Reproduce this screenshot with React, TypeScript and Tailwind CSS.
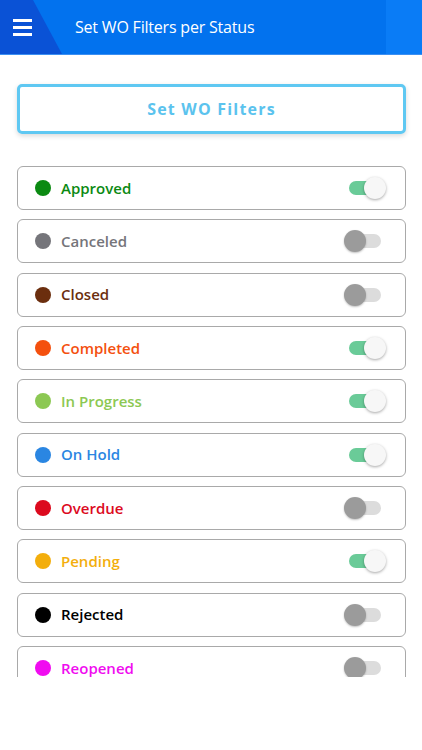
import React from "react";

const items: { name: string; color: string; on: boolean }[] = [
  { name: "Approved", color: "#0b8a12", on: true },
  { name: "Canceled", color: "#75757a", on: false },
  { name: "Closed", color: "#6b2e0e", on: false },
  { name: "Completed", color: "#f4500e", on: true },
  { name: "In Progress", color: "#8cc853", on: true },
  { name: "On Hold", color: "#2a86e2", on: true },
  { name: "Overdue", color: "#dc0a1e", on: false },
  { name: "Pending", color: "#f3ae0c", on: true },
  { name: "Rejected", color: "#000000", on: false },
  { name: "Reopened", color: "#f00cf0", on: false },
];

function Toggle({ on }: { on: boolean }) {
  return (
    <div className="relative w-[32px] h-[14px] mr-[24px]">
      <div
        className={
          on
            ? "absolute inset-0 rounded-full bg-[#6acb98]"
            : "absolute inset-0 rounded-full bg-[#dcdcdc]"
        }
      />
      {on ? (
        <div className="absolute top-[-4px] right-[-5px] w-[22px] h-[22px] rounded-full bg-[#f7f7f7] shadow-[0_1px_3px_rgba(0,0,0,0.35)]" />
      ) : (
        <div className="absolute top-[-4px] left-[-5px] w-[22px] h-[22px] rounded-full bg-[#9b9b9b] shadow-[0_1px_2px_rgba(0,0,0,0.25)]" />
      )}
    </div>
  );
}

export default function App() {
  return (
    <div
      className="w-[422px] h-[750px] bg-white overflow-hidden"
      style={{ fontFamily: '"Open Sans", "Noto Sans", sans-serif' }}
    >
      <header className="relative h-[55px] bg-[#0272ee] border-b border-[#3b8ff2] flex items-center overflow-hidden">
        <div
          className="absolute inset-y-0 left-0 w-[62px] bg-[#0a52d6]"
          style={{ clipPath: "polygon(0 0, 33px 0, 62px 100%, 0 100%)" }}
        />
        <div className="absolute inset-y-0 right-0 w-[36px] bg-[#0a7cf6]" />
        <div className="relative flex flex-col gap-[4px] ml-[13px] w-[19px]">
          <div className="h-[3px] bg-white" />
          <div className="h-[3px] bg-white" />
          <div className="h-[3px] bg-white" />
        </div>
        <div className="relative ml-[43px] text-white text-[16px] leading-none mb-[1px] tracking-[-0.2px]">
          Set WO Filters per Status
        </div>
      </header>
      <div className="h-[622px] overflow-hidden pl-[17px] pr-[16px]">
        <div className="mt-[29px] h-[50px] rounded-[5px] border-[3px] border-[#5fc8f2] shadow-[0_2px_5px_rgba(0,0,0,0.15)] flex items-center justify-center">
          <span className="text-[#5bc3ee] text-[16px] font-bold tracking-[1.2px]">
            Set WO Filters
          </span>
        </div>
        <div className="mt-[32px] flex flex-col gap-[9.33px]">
          {items.map((it) => (
            <div
              key={it.name}
              className="h-[44px] shrink-0 rounded-[6px] border border-[#a9a9a9] flex items-center"
            >
              <div
                className="w-[16px] h-[16px] rounded-full ml-[17px]"
                style={{ backgroundColor: it.color }}
              />
              <span
                className="ml-[10px] text-[15px] font-semibold flex-1"
                style={{ color: it.color }}
              >
                {it.name}
              </span>
              <Toggle on={it.on} />
            </div>
          ))}
        </div>
      </div>
    </div>
  );
}
